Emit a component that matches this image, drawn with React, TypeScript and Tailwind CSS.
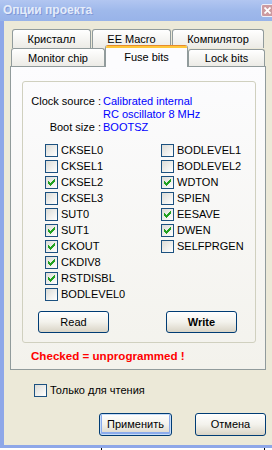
import React from "react";

const CHECK_PIXELS: [number, number, number][] = [
  [6, 0, 1],
  [5, 1, 2],
  [0, 2, 1],
  [4, 2, 3],
  [0, 3, 2],
  [3, 3, 3],
  [0, 4, 5],
  [1, 5, 3],
  [2, 6, 1],
];

function Box({ checked }: { checked?: boolean }) {
  return (
    <span className="w-[13px] h-[13px] border border-[#1c5180] bg-gradient-to-br from-[#dcdcd7] to-white flex items-center justify-center shrink-0">
      {checked && (
        <svg width="7" height="7" viewBox="0 0 7 7" shapeRendering="crispEdges">
          {CHECK_PIXELS.map(([x, y, w], i) => (
            <rect key={i} x={x} y={y} width={w} height={1} fill="#21a121" />
          ))}
        </svg>
      )}
    </span>
  );
}

function Check({ label, checked }: { label: string; checked?: boolean }) {
  return (
    <div className="h-[16px] flex items-start">
      <div className="h-[13px] flex items-center gap-[3px]">
        <Box checked={checked} />
        <span className="leading-[13px]">{label}</span>
      </div>
    </div>
  );
}

function Tab({ w, label }: { w: string; label: string }) {
  return (
    <div
      className={`${w} h-full border border-b-0 border-[#919b9c] rounded-t-[3px] bg-gradient-to-b from-white to-[#ecebe6] flex items-center justify-center`}
    >
      {label}
    </div>
  );
}

function XPButton({
  w,
  h,
  children,
  bold,
  def,
}: {
  w: string;
  h: string;
  children: React.ReactNode;
  bold?: boolean;
  def?: boolean;
}) {
  return (
    <div
      className={`${w} ${h} border border-[#003c74] rounded-[3px] bg-gradient-to-b from-white via-[#f3f2ec] to-[#d9d4c6] flex items-center justify-center ${
        bold ? "font-bold" : ""
      } ${def ? "shadow-[inset_0_0_0_1px_#c6dcf8,inset_0_-1px_0_2px_#8cacec]" : ""}`}
    >
      {children}
    </div>
  );
}

export default function App() {
  const left: [string, boolean][] = [
    ["CKSEL0", false],
    ["CKSEL1", false],
    ["CKSEL2", true],
    ["CKSEL3", false],
    ["SUT0", false],
    ["SUT1", true],
    ["CKOUT", true],
    ["CKDIV8", true],
    ["RSTDISBL", true],
    ["BODLEVEL0", false],
  ];
  const right: [string, boolean][] = [
    ["BODLEVEL1", false],
    ["BODLEVEL2", false],
    ["WDTON", true],
    ["SPIEN", false],
    ["EESAVE", true],
    ["DWEN", true],
    ["SELFPRGEN", false],
  ];

  return (
    <div className="w-[272px] h-[450px] overflow-hidden bg-white flex flex-col font-['Liberation_Sans',Arial,sans-serif] text-[11px] text-black">
      {/* Title bar */}
      <div className="h-[21px] shrink-0 flex items-start bg-gradient-to-b from-[#b2c6f1] via-[#9fb9eb] to-[#98b3e9]">
        <div className="flex-1 pl-[3px] pt-[3px] text-[12px] font-bold leading-[15px] text-[#e4ecfa] [text-shadow:1px_1px_0_#8199d8]">
          Опции проекта
        </div>
        <div className="mt-[4px] mr-[-2px] w-[13px] h-[13px] shrink-0 rounded-[2px] border border-[#eef0fa] bg-[#cc9aa0] flex items-center justify-center">
          <svg width="7" height="7" viewBox="0 0 7 7">
            <path d="M0.5 0.5 L6.5 6.5 M6.5 0.5 L0.5 6.5" stroke="white" strokeWidth="1.8" />
          </svg>
        </div>
      </div>

      {/* Body */}
      <div className="h-[427px] shrink-0 flex flex-col bg-[#ece9d8] border-l-[4px] border-b-[3px] border-[#8ea7e8]">
        <div className="ml-[6px] mt-[8px] w-[256px] flex flex-col">
          {/* Row 1 of tabs */}
          <div className="h-[19px] flex gap-[1px] pl-[2px]">
            <Tab w="w-[79px]" label="Кристалл" />
            <Tab w="w-[79px]" label="EE Macro" />
            <Tab w="w-[92px]" label="Компилятор" />
          </div>
          {/* Row 2 of tabs */}
          <div className="h-[18px] flex items-end pl-[1px] relative z-10">
            <div className="w-[94px] h-[18px] border border-b-0 border-[#919b9c] rounded-t-[3px] bg-gradient-to-b from-white to-[#ecebe6] flex items-center justify-center pt-[1px]">
              Monitor chip
            </div>
            <div className="w-[83px] h-[22px] -mb-px shrink-0 flex flex-col border-x border-[#919b9c] rounded-t-[3px] bg-[#fcfcfe] overflow-hidden">
              <div className="h-[1px] bg-[#e68b2c]" />
              <div className="h-[2px] bg-[#ffc73c]" />
              <div className="flex-1 flex items-start justify-center pt-[1px]">Fuse bits</div>
            </div>
            <div className="w-[77px] h-[17px] border border-b-0 border-[#919b9c] rounded-t-[3px] bg-gradient-to-b from-white to-[#ecebe6] flex items-center justify-center pt-[1px]">
              Lock bits
            </div>
          </div>

          {/* Tab panel */}
          <div className="h-[304px] border border-[#919b9c] bg-gradient-to-b from-[#fcfcfe] to-[#f3f2ec] flex flex-col">
            <div className="mt-[14px] ml-[11px] w-[234px] h-[262px] border border-[#d0d0bf] rounded-[3px] flex flex-col">
              <div className="pt-[13px] grid grid-cols-[78px_1fr] gap-x-[2px] leading-[13px]">
                <div className="text-right">Clock source :</div>
                <div className="text-[#0000ff]">
                  Calibrated internal
                  <br />
                  RC oscillator 8 MHz
                </div>
                <div className="text-right">Boot size :</div>
                <div className="text-[#0000ff]">BOOTSZ</div>
              </div>

              <div className="mt-[10px] pl-[22px] flex">
                <div className="w-[116px] flex flex-col">
                  {left.map(([l, c]) => (
                    <Check key={l} label={l} checked={c} />
                  ))}
                </div>
                <div className="flex flex-col">
                  {right.map(([l, c]) => (
                    <Check key={l} label={l} checked={c} />
                  ))}
                </div>
              </div>

              <div className="mt-[7px] flex pl-[15px]">
                <XPButton w="w-[71px]" h="h-[22px]">
                  Read
                </XPButton>
                <div className="w-[57px]" />
                <XPButton w="w-[71px]" h="h-[22px]" bold>
                  Write
                </XPButton>
              </div>
            </div>
            <div className="mt-[6px] pl-[20px] leading-[13px] font-bold text-[11.6px] text-[#ff0000]">
              Checked = unprogrammed !
            </div>
          </div>
        </div>

        {/* Read only */}
        <div className="mt-[14px] pl-[30px] h-[13px] flex items-center gap-[3px]">
          <Box />
          <span className="leading-[13px]">Только для чтения</span>
        </div>

        {/* Bottom buttons */}
        <div className="mt-[16px] pl-[95px] flex">
          <XPButton w="w-[73px]" h="h-[23px]" def>
            Применить
          </XPButton>
          <div className="w-[23px]" />
          <XPButton w="w-[71px]" h="h-[23px]">
            Отмена
          </XPButton>
        </div>
      </div>

      {/* Below the window */}
      <div className="h-[2px] flex bg-white">
        <div className="ml-[101px] w-px h-full bg-black" />
        <div className="ml-[162px] w-px h-full bg-black" />
      </div>
    </div>
  );
}
